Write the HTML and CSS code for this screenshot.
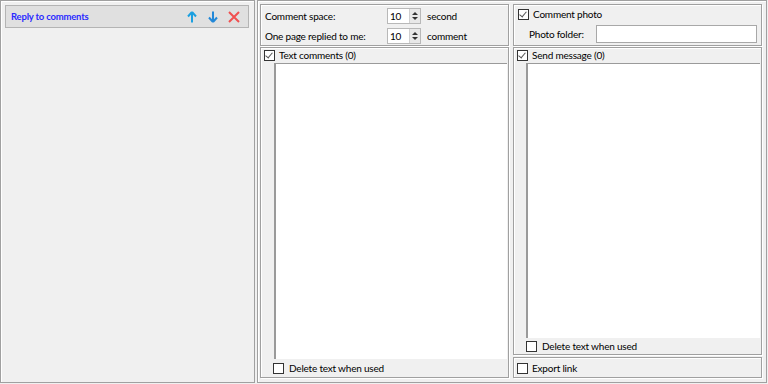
FILE: index.html
```html
<!DOCTYPE html>
<html lang="en">
<head>
  <meta charset="UTF-8" />
  <title>Reply to comments</title>
  <link rel="stylesheet" href="styles.css">
</head>
<body>

  <div class="tasks">
    <div class="task">
      <span class="task-name">Reply to comments</span>
      <span class="task-icons">
        <svg width="12" height="12" viewBox="0 0 12 12"><path d="M6 1 L2 5.5 M6 1 L10 5.5 M6 1 V11.5" stroke="#1ca0e0" stroke-width="2" fill="none"/></svg>
        <svg width="12" height="12" viewBox="0 0 12 12"><path d="M6 11 L2 6.5 M6 11 L10 6.5 M6 11 V0.5" stroke="#2288d8" stroke-width="2" fill="none"/></svg>
        <svg width="12" height="12" viewBox="0 0 12 12"><path d="M1 1 L11 11 M11 1 L1 11" stroke="#f05050" stroke-width="2" fill="none"/></svg>
      </span>
    </div>
  </div>

  <div class="settings">
    <div class="col">
      <div class="group group-top">
        <div class="field">
          <span class="field-label">Comment space:</span>
          <span class="spin"><span class="spin-val">10</span><span class="spin-btn"><i class="up"></i><i class="down"></i></span></span>
          <span>second</span>
        </div>
        <div class="field">
          <span class="field-label">One page replied to me:</span>
          <span class="spin"><span class="spin-val">10</span><span class="spin-btn"><i class="up"></i><i class="down"></i></span></span>
          <span>comment</span>
        </div>
      </div>
      <div class="group group-grow">
        <label class="check"><span class="box checked"></span>Text comments (0)</label>
        <div class="textbox"></div>
        <label class="check check-bottom"><span class="box"></span>Delete text when used</label>
      </div>
    </div>

    <div class="col">
      <div class="group group-top">
        <label class="check"><span class="box checked"></span>Comment photo</label>
        <div class="folder">
          <span class="folder-label">Photo folder:</span>
          <span class="folder-input"></span>
        </div>
      </div>
      <div class="group group-grow">
        <label class="check"><span class="box checked"></span>Send message (0)</label>
        <div class="textbox textbox-right"></div>
        <label class="check check-bottom check-tight"><span class="box"></span>Delete text when used</label>
      </div>
      <div class="group group-export">
        <label class="check"><span class="box"></span>Export link</label>
      </div>
    </div>
  </div>

</body>
</html>
```

FILE: styles.css
```css
:root {
  --bg: #f0f0f0;
  --line: #a0a0a0;
  --text: #000;
}

* {
  margin: 0;
  padding: 0;
  box-sizing: border-box;
}

body {
  width: 768px;
  height: 384px;
  background: var(--bg);
  font-family: Lato, "Noto Sans", sans-serif;
  font-size: 10px;
  letter-spacing: -0.2px;
  color: var(--text);
  display: flex;
  gap: 2px;
  overflow: hidden;
}

.tasks {
  width: 255px;
  height: 383px;
  border: 1px solid var(--line);
  box-shadow: inset 1px 1px 0 #fff;
  padding: 4px 5px 0 4px;
}

.task {
  height: 23px;
  background: #e0e0e0;
  border: 1px solid #b4b4b4;
  display: flex;
  align-items: center;
  justify-content: space-between;
  padding: 0 8px 0 5px;
}

.task-name {
  color: #2a2aff;
  font-size: 9.5px;
  font-weight: 700;
}

.task-icons {
  display: flex;
  gap: 9px;
}

.settings {
  width: 510px;
  height: 383px;
  border: 1px solid var(--line);
  box-shadow: inset 1px 1px 0 #fff;
  padding: 3px 0 0 2px;
  display: grid;
  grid-template-columns: 249px 249px;
  column-gap: 4px;
}

.col {
  display: flex;
  flex-direction: column;
  gap: 1px;
}

.group {
  border: 1px solid var(--line);
  box-shadow: inset 1px 1px 0 #fff, 1px 1px 0 #fff;
}

.group-top {
  height: 42px;
  padding: 1px 4px 0 4px;
}

.group-grow {
  flex: 1;
  display: flex;
  flex-direction: column;
  padding: 0 1px 0 3px;
}

.col:first-child .group-grow {
  margin-bottom: 4px;
}

.group-export {
  height: 21px;
  margin: 1px 0 4px;
  padding: 3px 0 0 3px;
}

.field {
  display: flex;
  align-items: center;
  height: 20px;
}

.field-label {
  width: 122px;
}

.spin {
  width: 34px;
  height: 16px;
  background: #fff;
  border: 1px solid #b8b8b8;
  display: flex;
  justify-content: space-between;
  margin-right: 6px;
}

.spin-val {
  padding-left: 2px;
  line-height: 14px;
}

.spin-btn {
  width: 11px;
  background: #e8e8e8;
  border-left: 1px solid #d0d0d0;
  display: flex;
  flex-direction: column;
  align-items: center;
  justify-content: space-around;
  padding: 2px 0;
}

.spin-btn i {
  width: 0;
  height: 0;
  border-left: 3px solid transparent;
  border-right: 3px solid transparent;
}

.spin-btn .up {
  border-bottom: 3px solid #333;
}

.spin-btn .down {
  border-top: 3px solid #333;
}

.check {
  display: flex;
  align-items: center;
  gap: 4px;
  height: 12px;
  margin-top: 1px;
}

.box {
  width: 11px;
  height: 11px;
  border: 1px solid #333;
  background: #fff;
  position: relative;
}

.box.checked::after {
  content: "";
  position: absolute;
  left: 2px;
  top: 0;
  width: 3px;
  height: 6px;
  border-right: 1px solid #555;
  border-bottom: 1px solid #555;
  transform: rotate(40deg);
}

.textbox {
  flex: 1;
  margin: 2px 0 0 10px;
  background: #fff;
  border-left: 2px solid #9a9a9a;
  border-top: 1px solid #9a9a9a;
}

.textbox-right {
  margin-left: 9px;
}

.check-bottom {
  margin: 1px 0 1px 9px;
  height: 16px;
  gap: 5px;
}

.check-tight {
  margin: 2px 0 2px 9px;
  height: 12px;
}

.group-top .check {
  height: 16px;
  margin-top: 0;
}

.folder {
  display: flex;
  align-items: center;
  height: 20px;
  margin-top: 2px;
  padding-left: 11px;
}

.folder-label {
  width: 68px;
}

.folder-input {
  width: 162px;
  height: 18px;
  background: #fff;
  border: 1px solid #a8a8a8;
}
```
